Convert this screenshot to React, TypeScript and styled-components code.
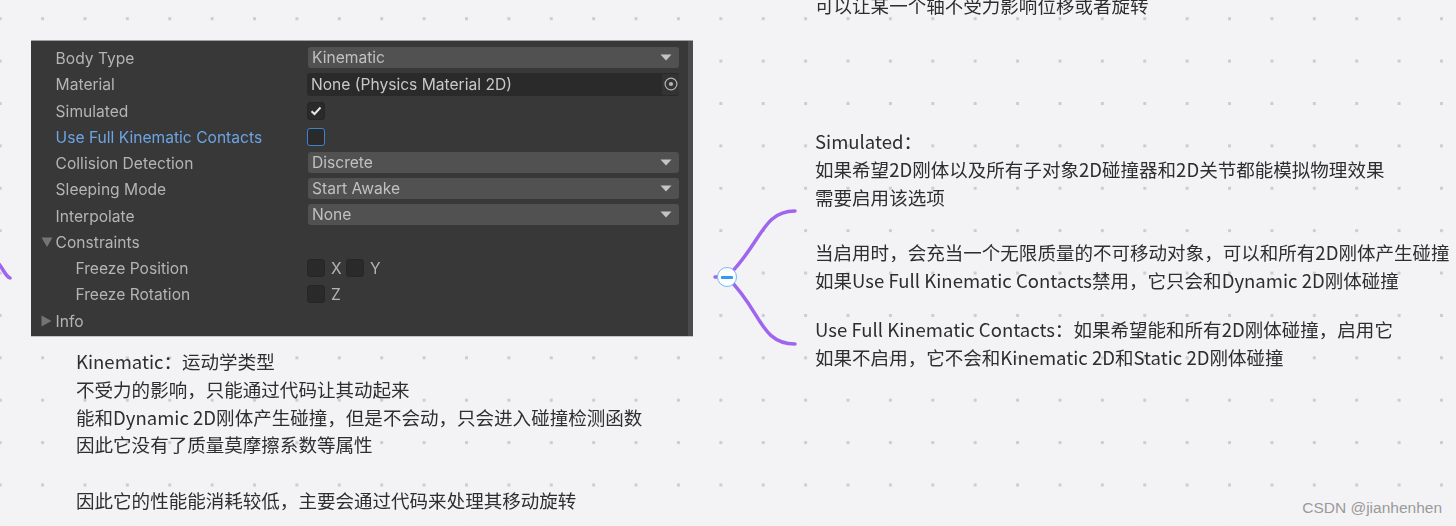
import React from 'react';
import styled, { createGlobalStyle } from 'styled-components';

const GlobalStyle = createGlobalStyle`
   html, body {
      margin: 0;
      padding: 0;
      height: 526px;
      overflow: hidden;
   }
`;

type DropdownRow = { label: string; value: string };

const Arrow = () => (
   <svg width="12" height="7" viewBox="0 0 12 7">
      <path d="M0.5 0.5h11L6 6.5z" fill="#c4c4c4" />
   </svg>
);

const Dropdown = ({ value }: { value: string }) => (
   <Select>
      <span>{value}</span>
      <Arrow />
   </Select>
);

const Check = () => (
   <svg width="12" height="10" viewBox="0 0 12 10">
      <path d="M1.5 5.2 4.5 8l6-6.5" fill="none" stroke="#e6e6e6" strokeWidth="2" />
   </svg>
);

const lowerRows: DropdownRow[] = [
   { label: 'Collision Detection', value: 'Discrete' },
   { label: 'Sleeping Mode', value: 'Start Awake' },
   { label: 'Interpolate', value: 'None' },
];

export default function App() {
   return (
      <Canvas>
         <GlobalStyle />

         <Branches width="1456" height="526" viewBox="0 0 1456 526">
            <path d="M-2 263C3 268 5 276 10 278" />
            <path d="M715 277H727C762 243 762 211 795 211" />
            <path d="M727 277C762 311 760 344 795 344" />
         </Branches>
         <Collapse />

         <LeftColumn>
            <Panel>
               <Row>
                  <Label>Body Type</Label>
                  <Dropdown value="Kinematic" />
               </Row>
               <Row>
                  <Label>Material</Label>
                  <ObjectField>
                     <span>None (Physics Material 2D)</span>
                     <Picker>
                        <svg width="14" height="14" viewBox="0 0 14 14">
                           <circle cx="7" cy="7" r="5.9" fill="none" stroke="#b4b4b4" strokeWidth="1.2" />
                           <circle cx="7" cy="7" r="2.1" fill="#b4b4b4" />
                        </svg>
                     </Picker>
                  </ObjectField>
               </Row>
               <Row>
                  <Label>Simulated</Label>
                  <Box>
                     <Check />
                  </Box>
               </Row>
               <Row>
                  <Label $active>Use Full Kinematic Contacts</Label>
                  <Box $focus />
               </Row>
               {lowerRows.map((row) => (
                  <Row key={row.label}>
                     <Label>{row.label}</Label>
                     <Dropdown value={row.value} />
                  </Row>
               ))}
               <Row>
                  <FoldLabel>
                     <Fold>
                        <svg width="12" height="10" viewBox="0 0 12 10">
                           <path d="M0.5 0.5h11L6 10z" fill="#747474" />
                        </svg>
                     </Fold>
                     Constraints
                  </FoldLabel>
               </Row>
               <Row>
                  <SubLabel>Freeze Position</SubLabel>
                  <Axes>
                     <Box />
                     <AxisName>X</AxisName>
                     <Box />
                     <AxisName>Y</AxisName>
                  </Axes>
               </Row>
               <Row>
                  <SubLabel>Freeze Rotation</SubLabel>
                  <Axes>
                     <Box />
                     <AxisName>Z</AxisName>
                  </Axes>
               </Row>
               <Row>
                  <FoldLabel>
                     <Fold>
                        <svg width="11" height="12" viewBox="0 0 11 12">
                           <path d="M0.5 0.5v11L10.5 6z" fill="#747474" />
                        </svg>
                     </Fold>
                     Info
                  </FoldLabel>
               </Row>
            </Panel>

            <KinematicNote>
               <Line>Kinematic：运动学类型</Line>
               <Line>不受力的影响，只能通过代码让其动起来</Line>
               <Line>能和Dynamic 2D刚体产生碰撞，但是不会动，只会进入碰撞检测函数</Line>
               <Line>因此它没有了质量莫摩擦系数等属性</Line>
               <Line />
               <Line>因此它的性能能消耗较低，主要会通过代码来处理其移动旋转</Line>
            </KinematicNote>
         </LeftColumn>

         <RightColumn>
            <Note>
               <Line>可以让某一个轴不受力影响位移或者旋转</Line>
            </Note>

            <Note>
               <Line>Simulated：</Line>
               <Line>如果希望2D刚体以及所有子对象2D碰撞器和2D关节都能模拟物理效果</Line>
               <Line>需要启用该选项</Line>
               <Line />
               <Line>当启用时，会充当一个无限质量的不可移动对象，可以和所有2D刚体产生碰撞</Line>
               <Line>如果Use Full Kinematic Contacts禁用，它只会和Dynamic 2D刚体碰撞</Line>
            </Note>

            <Note>
               <Line>Use Full Kinematic Contacts：如果希望能和所有2D刚体碰撞，启用它</Line>
               <Line>如果不启用，它不会和Kinematic 2D和Static 2D刚体碰撞</Line>
            </Note>
         </RightColumn>

         <Watermark>CSDN @jianhenhen</Watermark>
      </Canvas>
   );
}

const Canvas = styled.div`
   position: relative;
   display: flex;
   width: 1456px;
   height: 526px;
   box-sizing: border-box;
   padding: 41px 0 0 31px;
   overflow: hidden;
   background-color: #f3f3f6;
   background-image: radial-gradient(circle at center, #cdcdcd 1.5px, transparent 2px);
   background-size: 42.4px 42.4px;
   background-position: -21px -2.5px;
`;

const Branches = styled.svg`
   position: absolute;
   inset: 0;
   fill: none;
   stroke: #a065ee;
   stroke-width: 3.5;
   stroke-linecap: round;
`;

const Collapse = styled.div`
   position: absolute;
   left: 717px;
   top: 267px;
   width: 20px;
   height: 20px;
   box-sizing: border-box;
   border: 1.5px solid #6db9fb;
   border-radius: 50%;
   background: #ffffff;
   display: flex;
   align-items: center;
   justify-content: center;

   &::before {
      content: '';
      width: 12px;
      height: 3px;
      border-radius: 1px;
      background: #2f9bf5;
   }
`;

const LeftColumn = styled.div`
   display: flex;
   flex-direction: column;
   gap: 11px;
   width: 662px;
   flex-shrink: 0;
`;

const RightColumn = styled.div`
   display: flex;
   flex-direction: column;
   margin: -50px 0 0 122px;

   & > :nth-child(2) {
      margin-top: 108.2px;
   }

   & > :nth-child(3) {
      margin-top: 21.3px;
   }
`;

const Panel = styled.div`
   width: 662px;
   height: 295px;
   box-sizing: border-box;
   padding: 4px 9px 0 0;
   background: #383838;
   border-right: 5px solid #4b4b4b;
   box-shadow: 0 -1px #a0a0a0, 0 1px #c4c4c4;
   font-family: Inter, sans-serif;
   font-size: 15.6px;
   color: #b4b4b4;
   filter: blur(0.4px);
`;

const Row = styled.div`
   display: grid;
   grid-template-columns: 276px 1fr;
   align-items: center;
   height: 26.25px;
`;

const Label = styled.div<{ $active?: boolean }>`
   display: flex;
   align-items: center;
   padding: 1px 0 0 24.6px;
   white-space: nowrap;
   color: ${(props) => (props.$active ? '#6ca4e4' : '#b4b4b4')};
`;

const SubLabel = styled(Label)`
   padding-left: 44.5px;
`;

const FoldLabel = styled(Label)`
   padding-left: 10px;
`;

const Fold = styled.span`
   display: flex;
   width: 14.6px;
`;

const Select = styled.div`
   display: flex;
   align-items: center;
   justify-content: space-between;
   height: 21px;
   margin: 0 0 2px 1px;
   padding: 0 7px 0 4px;
   border-radius: 3px;
   background: #515151;
   color: #c0c0c0;
`;

const ObjectField = styled.div`
   display: flex;
   align-items: center;
   justify-content: space-between;
   height: 23px;
   padding-left: 4px;
   border-radius: 3px;
   background: #2a2a2a;
   color: #c8c8c8;
`;

const Picker = styled.div`
   display: flex;
   align-items: center;
   justify-content: center;
   width: 17px;
   height: 21px;
   background: #333333;
   border-radius: 0 3px 3px 0;
`;

const Box = styled.div<{ $focus?: boolean }>`
   display: flex;
   align-items: center;
   justify-content: center;
   width: 18px;
   height: 18px;
   box-sizing: border-box;
   border-radius: 3px;
   background: #2a2a2a;
   border: 1px solid ${(props) => (props.$focus ? '#3d82cc' : '#262626')};
`;

const Axes = styled.div`
   display: flex;
   align-items: center;
`;

const AxisName = styled.span`
   width: 21px;
   padding-left: 6px;
   box-sizing: border-box;
`;

const Note = styled.div`
   font-family: 'Noto Sans CJK SC', 'Noto Sans', sans-serif;
   font-size: 18.55px;
   line-height: 27.8px;
   color: #2e2e2e;
   white-space: nowrap;
   filter: blur(0.3px);
`;

const KinematicNote = styled(Note)`
   padding-left: 45px;
`;

const Line = styled.div`
   min-height: 27.8px;
`;

const Watermark = styled.div`
   position: absolute;
   right: 14px;
   bottom: 9px;
   font-family: 'Liberation Sans', sans-serif;
   font-size: 15.5px;
   color: #9a9a9a;
`;
